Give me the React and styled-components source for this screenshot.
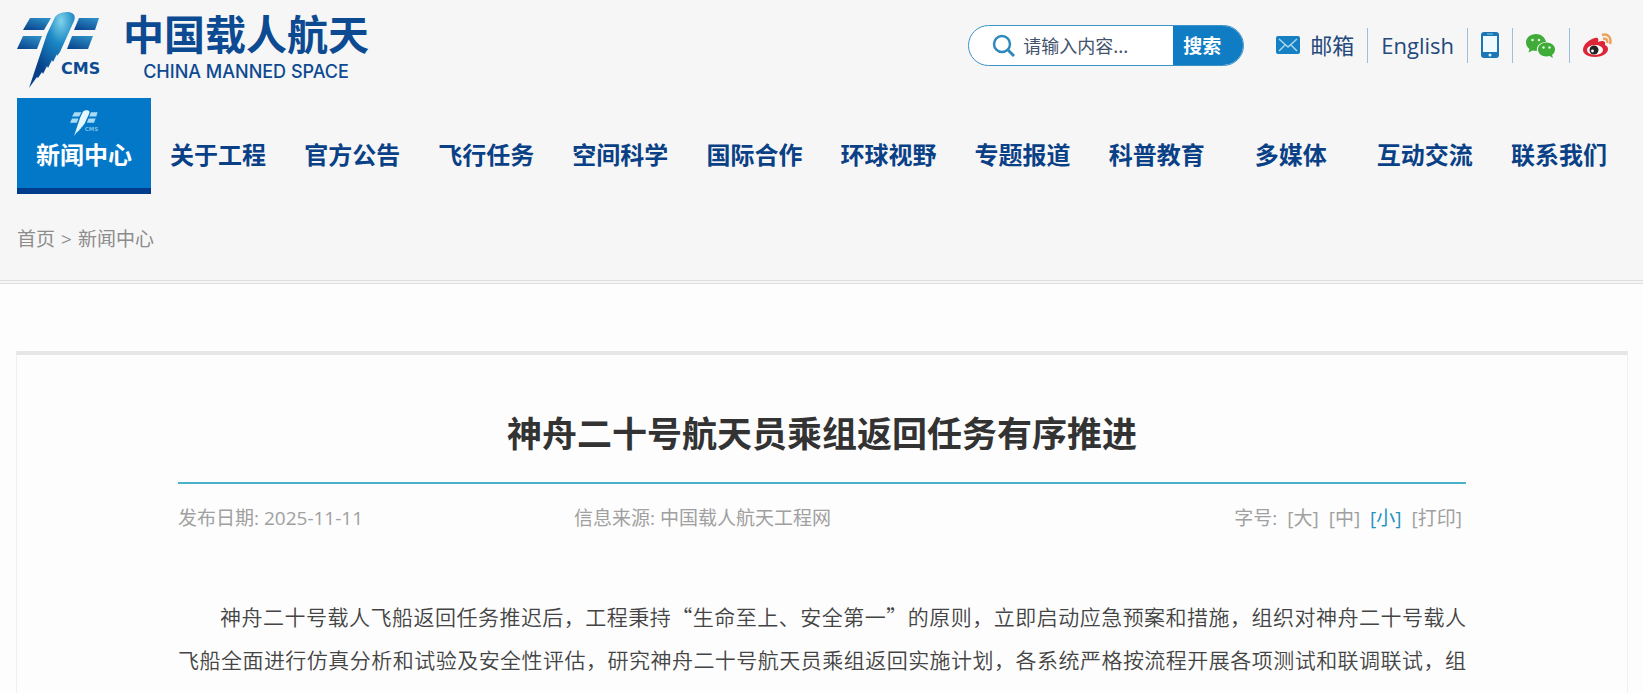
import React, { useState } from "react";
import styled, { createGlobalStyle } from "styled-components";

const GlobalStyle = createGlobalStyle`
  * {
    box-sizing: border-box;
  }

  body {
    margin: 0;
    overflow-x: hidden;
    background: #fdfdfd;
    color: #444;
    font-family: "Open Sans", "Noto Sans CJK SC", sans-serif;
  }

  a {
    color: inherit;
    text-decoration: none;
  }
`;

const Page = styled.div`
  display: flex;
  flex-direction: column;
  min-height: 100vh;
`;

const Header = styled.header`
  flex: none;
  padding: 8px 17px 27px;
  background: #f6f6f6;
  border-bottom: 4px double #dedede;
`;

const TopBar = styled.div`
  display: flex;
  align-items: flex-start;
  justify-content: space-between;
  height: 90px;
`;

const Brand = styled.a`
  display: flex;
  align-items: flex-start;
  gap: 20px;
  color: #0c4a92;
`;

const BrandText = styled.span`
  display: flex;
  flex-direction: column;
  align-items: center;
`;

const BrandName = styled.span`
  font: 700 41px/48px "Noto Sans CJK SC", sans-serif;
`;

const BrandLatin = styled.span`
  font: 500 18px/32px Inter, "Liberation Sans", sans-serif;
`;

const Tools = styled.div`
  display: flex;
  align-items: center;
  height: 74px;
`;

const SearchForm = styled.form`
  display: flex;
  align-items: center;
  width: 276px;
  height: 41px;
  margin-right: 32px;
  padding-left: 23px;
  overflow: hidden;
  background: #fff;
  border: 1px solid #3c93c6;
  border-radius: 21px;
`;

const SearchInput = styled.input`
  flex: 1;
  min-width: 0;
  padding: 0 8px;
  border: 0;
  outline: 0;
  background: none;
  font: 400 18px/24px "Noto Sans CJK SC", sans-serif;

  &::placeholder {
    color: #44546e;
    opacity: 1;
  }
`;

const SearchButton = styled.button`
  width: 70px;
  height: 41px;
  padding: 0 14px 0 10px;
  border: 0;
  background: #107cc4;
  color: #fff;
  font: 700 19px/24px "Noto Sans CJK SC", sans-serif;
  text-align: left;
  white-space: nowrap;
`;

const ToolLink = styled.a`
  display: flex;
  align-items: center;
  gap: 10px;
  height: 35px;
  padding: 0 13px;
  border-left: ${({ $first }) => ($first ? "0" : "1px solid #9dbfdc")};
  ${({ $first }) => $first && "padding-left: 0;"}
  color: #24497c;
  font-size: 22px;
  line-height: 35px;
`;

const Nav = styled.nav`
  display: grid;
  grid-template-columns: repeat(12, 1fr);
  height: 96px;
`;

const NavLink = styled.a`
  display: flex;
  flex-direction: column;
  align-items: center;
  justify-content: flex-end;
  padding-bottom: ${({ $active }) => ($active ? "16px" : "22px")};
  border-bottom: ${({ $active }) => ($active ? "6px solid #003c8c" : "0")};
  background: ${({ $active }) => ($active ? "#0478c8" : "none")};
  color: ${({ $active }) => ($active ? "#fff" : "#0a4186")};
  font: 700 24px/36px "Noto Sans CJK SC", sans-serif;
  white-space: nowrap;
`;

const Breadcrumb = styled.div`
  display: flex;
  gap: 6px;
  padding-top: 31px;
  color: #8c8c8c;
  font-size: 19px;
  line-height: 28px;
`;

const Article = styled.main`
  flex: 1;
  margin: 67px 15px 0 16px;
  padding-top: 52px;
  border: 1px solid #f0f0f0;
  border-top: 4px solid #e6e6e6;
  border-bottom: 0;
`;

const ArticleBody = styled.div`
  width: 80%;
  margin: 0 auto;
`;

const Title = styled.h1`
  margin: 0;
  padding-bottom: 25px;
  border-bottom: 2px solid #4bb1cb;
  color: #333;
  font: 700 35px/50px "Noto Sans CJK SC", sans-serif;
  text-align: center;
`;

const Meta = styled.div`
  display: grid;
  grid-template-columns: 396px 1fr auto;
  padding: 20px 4px 0 0;
  color: #a0a0a0;
  font-size: 19px;
  line-height: 28px;
`;

const FontSizes = styled.div`
  display: flex;
  gap: 10px;
`;

const SizeButton = styled.button`
  padding: 0;
  border: 0;
  background: none;
  color: ${({ $active }) => ($active ? "#2591bf" : "inherit")};
  font: inherit;
`;

const Paragraph = styled.p`
  margin: 63px 0 0;
  color: #444;
  font: 350 21px/43px "Noto Sans CJK SC", sans-serif;
  text-indent: 2em;
  text-align: justify;
  text-align-last: justify;
`;

const blades = [
  "M13 10h21l-7 12H6z",
  "M6 28h19l-5 13H0z",
  "M62 10h20l-4 12H57z",
  "M55 28h21l-5 13H50z",
];

const Emblem = ({ width, light }) => (
  <svg
    width={width}
    viewBox="0 0 86 80"
    fill={light ? "#a9dcf2" : "url(#blade)"}
    aria-hidden="true"
  >
    {!light && (
      <defs>
        <linearGradient id="blade" x1="0.8" y1="0" x2="0.2" y2="1">
          <stop offset="0" stopColor="#2d8fc6" />
          <stop offset="1" stopColor="#0a4690" />
        </linearGradient>
        <radialGradient id="body" cx="0.7" cy="0.12" r="0.75">
          <stop offset="0" stopColor="#7fd3ea" />
          <stop offset="0.4" stopColor="#1b87c4" />
          <stop offset="1" stopColor="#07418a" />
        </radialGradient>
      </defs>
    )}
    {blades.map((d) => (
      <path key={d} d={d} />
    ))}
    <path
      fill={light ? "#e6f8ff" : "url(#body)"}
      d="M38 9C41 5 46 4 52 4C57 5 59 8 57 13L43 44L40 48L40 46L36 54L35 52L31 60L30 58L26 66L25 64L21 70L20 69L12 80L22 50L30 26Z"
    />
    <text
      x="44"
      y="66"
      fill={light ? "#7cc0e6" : "#0c4a92"}
      fontFamily="DejaVu Sans, sans-serif"
      fontWeight="700"
      fontSize="16"
    >
      CMS
    </text>
  </svg>
);

const SearchIcon = () => (
  <svg width="23" height="23" viewBox="0 0 23 23" fill="none" stroke="#3189bb">
    <circle cx="10" cy="10" r="8" strokeWidth="2.5" />
    <path d="M16 16l6 6" strokeWidth="3" />
  </svg>
);

const MailIcon = () => (
  <svg width="24" height="18" viewBox="0 0 24 18" fill="none">
    <rect width="24" height="18" rx="2" fill="#1580c4" />
    <path d="M3 3l9 8 9-8M3 15l6-6M21 15l-6-6" stroke="#a9d8ee" strokeWidth="1.5" />
  </svg>
);

const PhoneIcon = () => (
  <svg width="18" height="26" viewBox="0 0 18 26">
    <rect width="18" height="26" rx="3" fill="#1a76b4" />
    <path d="M2 4h14v16H2z" fill="#eefaff" />
    <path d="M6 2h6" stroke="#8cc5e2" />
    <circle cx="9" cy="23" r="1.5" fill="#e0f3fb" />
  </svg>
);

const WechatIcon = () => (
  <svg width="30" height="25" viewBox="0 0 30 25">
    <path
      fill="#3fac38"
      d="M10 1C4 1 0 5 0 9.500c0 3 1.500 5 3.500 6.500l-1 3.500 4-2 4.500.5c-1-5 3-9 9-9C19 4 15 1 10 1z"
    />
    <path
      fill="#3fac38"
      d="M20.500 9.500c-5 0-8.500 3-8.500 7s3.500 7 8.500 7l3-.5 3.500 2-1-3c2-1.500 3-3.500 3-5.500 0-4-3.500-7-8.500-7z"
    />
    <g fill="#e5f6e1">
      <circle cx="6.500" cy="7" r="1.300" />
      <circle cx="13" cy="7" r="1.300" />
      <circle cx="17.500" cy="14.500" r="1.200" />
      <circle cx="23.500" cy="14.500" r="1.200" />
    </g>
  </svg>
);

const WeiboIcon = () => (
  <svg width="30" height="25" viewBox="0 0 30 25" fill="none">
    <path
      fill="#dc2638"
      d="M12 5C7 6 0 11 0 17c0 4 5 7 12 7 8 0 13-4 13-8 0-2-1-3-3-4 1-4-2-5-7-3 1-3 0-5-3-4z"
    />
    <ellipse cx="12" cy="17" rx="8" ry="5" fill="#fff" />
    <circle cx="11" cy="17" r="4.500" fill="#222" />
    <circle cx="9.500" cy="18" r="1.400" fill="#fff" />
    <path d="M19 2c6-2 10 3 8 9M20 6c3-1 5 1 4 4" stroke="#eda15a" strokeWidth="2.500" />
  </svg>
);

const navItems = [
  "新闻中心",
  "关于工程",
  "官方公告",
  "飞行任务",
  "空间科学",
  "国际合作",
  "环球视野",
  "专题报道",
  "科普教育",
  "多媒体",
  "互动交流",
  "联系我们",
];

const sizes = ["大", "中", "小"];

const App = () => {
  const [size, setSize] = useState("小");

  return (
    <Page>
      <GlobalStyle />
      <Header>
        <TopBar>
          <Brand href="#">
            <Emblem width="86" />
            <BrandText>
              <BrandName>中国载人航天</BrandName>
              <BrandLatin>CHINA MANNED SPACE</BrandLatin>
            </BrandText>
          </Brand>
          <Tools>
            <SearchForm onSubmit={(e) => e.preventDefault()}>
              <SearchIcon />
              <SearchInput aria-label="搜索内容" placeholder="请输入内容..." />
              <SearchButton type="submit">搜索</SearchButton>
            </SearchForm>
            <ToolLink href="#" $first>
              <MailIcon />
              邮箱
            </ToolLink>
            <ToolLink href="#">English</ToolLink>
            <ToolLink href="#" aria-label="手机版">
              <PhoneIcon />
            </ToolLink>
            <ToolLink href="#" aria-label="微信">
              <WechatIcon />
            </ToolLink>
            <ToolLink href="#" aria-label="微博">
              <WeiboIcon />
            </ToolLink>
          </Tools>
        </TopBar>
        <Nav>
          {navItems.map((item, i) => (
            <NavLink key={item} href="#" $active={i === 0}>
              {i === 0 && <Emblem width="29" light />}
              {item}
            </NavLink>
          ))}
        </Nav>
        <Breadcrumb>
          <a href="#">首页</a>
          <span>&gt;</span>
          <a href="#">新闻中心</a>
        </Breadcrumb>
      </Header>
      <Article>
        <ArticleBody>
          <Title>神舟二十号航天员乘组返回任务有序推进</Title>
          <Meta>
            <span>发布日期: 2025-11-11</span>
            <span>信息来源: 中国载人航天工程网</span>
            <FontSizes>
              <span>字号:</span>
              {sizes.map((s) => (
                <SizeButton key={s} $active={s === size} onClick={() => setSize(s)}>
                  [{s}]
                </SizeButton>
              ))}
              <SizeButton onClick={() => window.print()}>[打印]</SizeButton>
            </FontSizes>
          </Meta>
          <Paragraph>
            神舟二十号载人飞船返回任务推迟后，工程秉持“生命至上、安全第一”的原则，立即启动应急预案和措施，组织对神舟二十号载人
            <br />
            飞船全面进行仿真分析和试验及安全性评估，研究神舟二十号航天员乘组返回实施计划，各系统严格按流程开展各项测试和联调联试，组
          </Paragraph>
        </ArticleBody>
      </Article>
    </Page>
  );
};

export default App;
